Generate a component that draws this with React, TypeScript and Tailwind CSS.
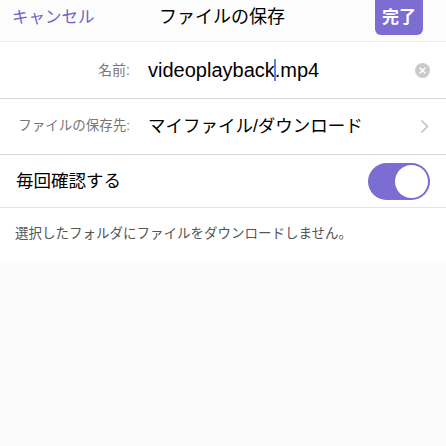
export default function App() {
  return (
    <div
      className="flex h-[446px] w-[446px] flex-col bg-[#fbfbfb] text-black"
      style={{ fontFamily: '"Liberation Sans", "Noto Sans CJK JP", sans-serif' }}
    >
      {/* nav bar */}
      <div className="flex h-[42px] items-start border-b border-[#ececec] bg-[#fcfcfc]">
        <div className="flex h-[34px] w-[150px] items-center pl-[12px] text-[16.5px] text-[#6d62c4]">
          キャンセル
        </div>
        <div className="flex h-[34px] flex-1 items-center pl-[9px] text-[18px]">ファイルの保存</div>
        <button className="mr-[23px] flex h-[35px] w-[48px] items-center justify-center rounded-b-[6px] bg-[#7b6dd1] text-[17px] font-bold text-white">
          完了
        </button>
      </div>

      <div className="bg-white">
        {/* name row */}
        <div className="flex h-[57px] items-center border-b border-[#d9d9d9]">
          <div className="w-[130px] text-right text-[14px] text-[#777]">名前:</div>
          <div className="ml-[18px] flex flex-1 items-center text-[20px]">
            <span>videoplayback</span>
            <span className="mx-[-1px] h-[22px] w-[2px] bg-[#5b84e6]" />
            <span>.mp4</span>
          </div>
          <div className="mr-[16px] flex h-[15px] w-[15px] items-center justify-center rounded-full bg-[#cacaca]">
            <svg width="7" height="7" viewBox="0 0 7 7">
              <path d="M1 1 L6 6 M6 1 L1 6" stroke="white" strokeWidth="1.6" strokeLinecap="round" />
            </svg>
          </div>
        </div>

        {/* location row */}
        <div className="flex h-[56px] items-center border-b border-[#d9d9d9]">
          <div className="w-[130px] text-right text-[13.5px] text-[#777]">ファイルの保存先:</div>
          <div className="ml-[18px] flex-1 text-[17.5px]">マイファイル/ダウンロード</div>
          <svg className="mr-[17px]" width="9" height="15" viewBox="0 0 9 15">
            <path d="M1.5 1.5 L7.5 7.5 L1.5 13.5" fill="none" stroke="#c2c2c2" strokeWidth="1.6" />
          </svg>
        </div>

        {/* toggle row */}
        <div className="flex h-[53px] items-center justify-between border-b border-[#e2e2e2] px-[16px]">
          <div className="text-[17.5px]">毎回確認する</div>
          <div className="flex h-[37px] w-[62px] items-center justify-end rounded-full bg-[#7b6dd1] p-[2px]">
            <div className="h-[33px] w-[33px] rounded-full bg-white" />
          </div>
        </div>

        {/* footer note */}
        <div className="flex h-[53px] items-center pl-[15px] text-[13.5px] text-[#555]">
          選択したフォルダにファイルをダウンロードしません。
        </div>
      </div>
    </div>
  );
}
